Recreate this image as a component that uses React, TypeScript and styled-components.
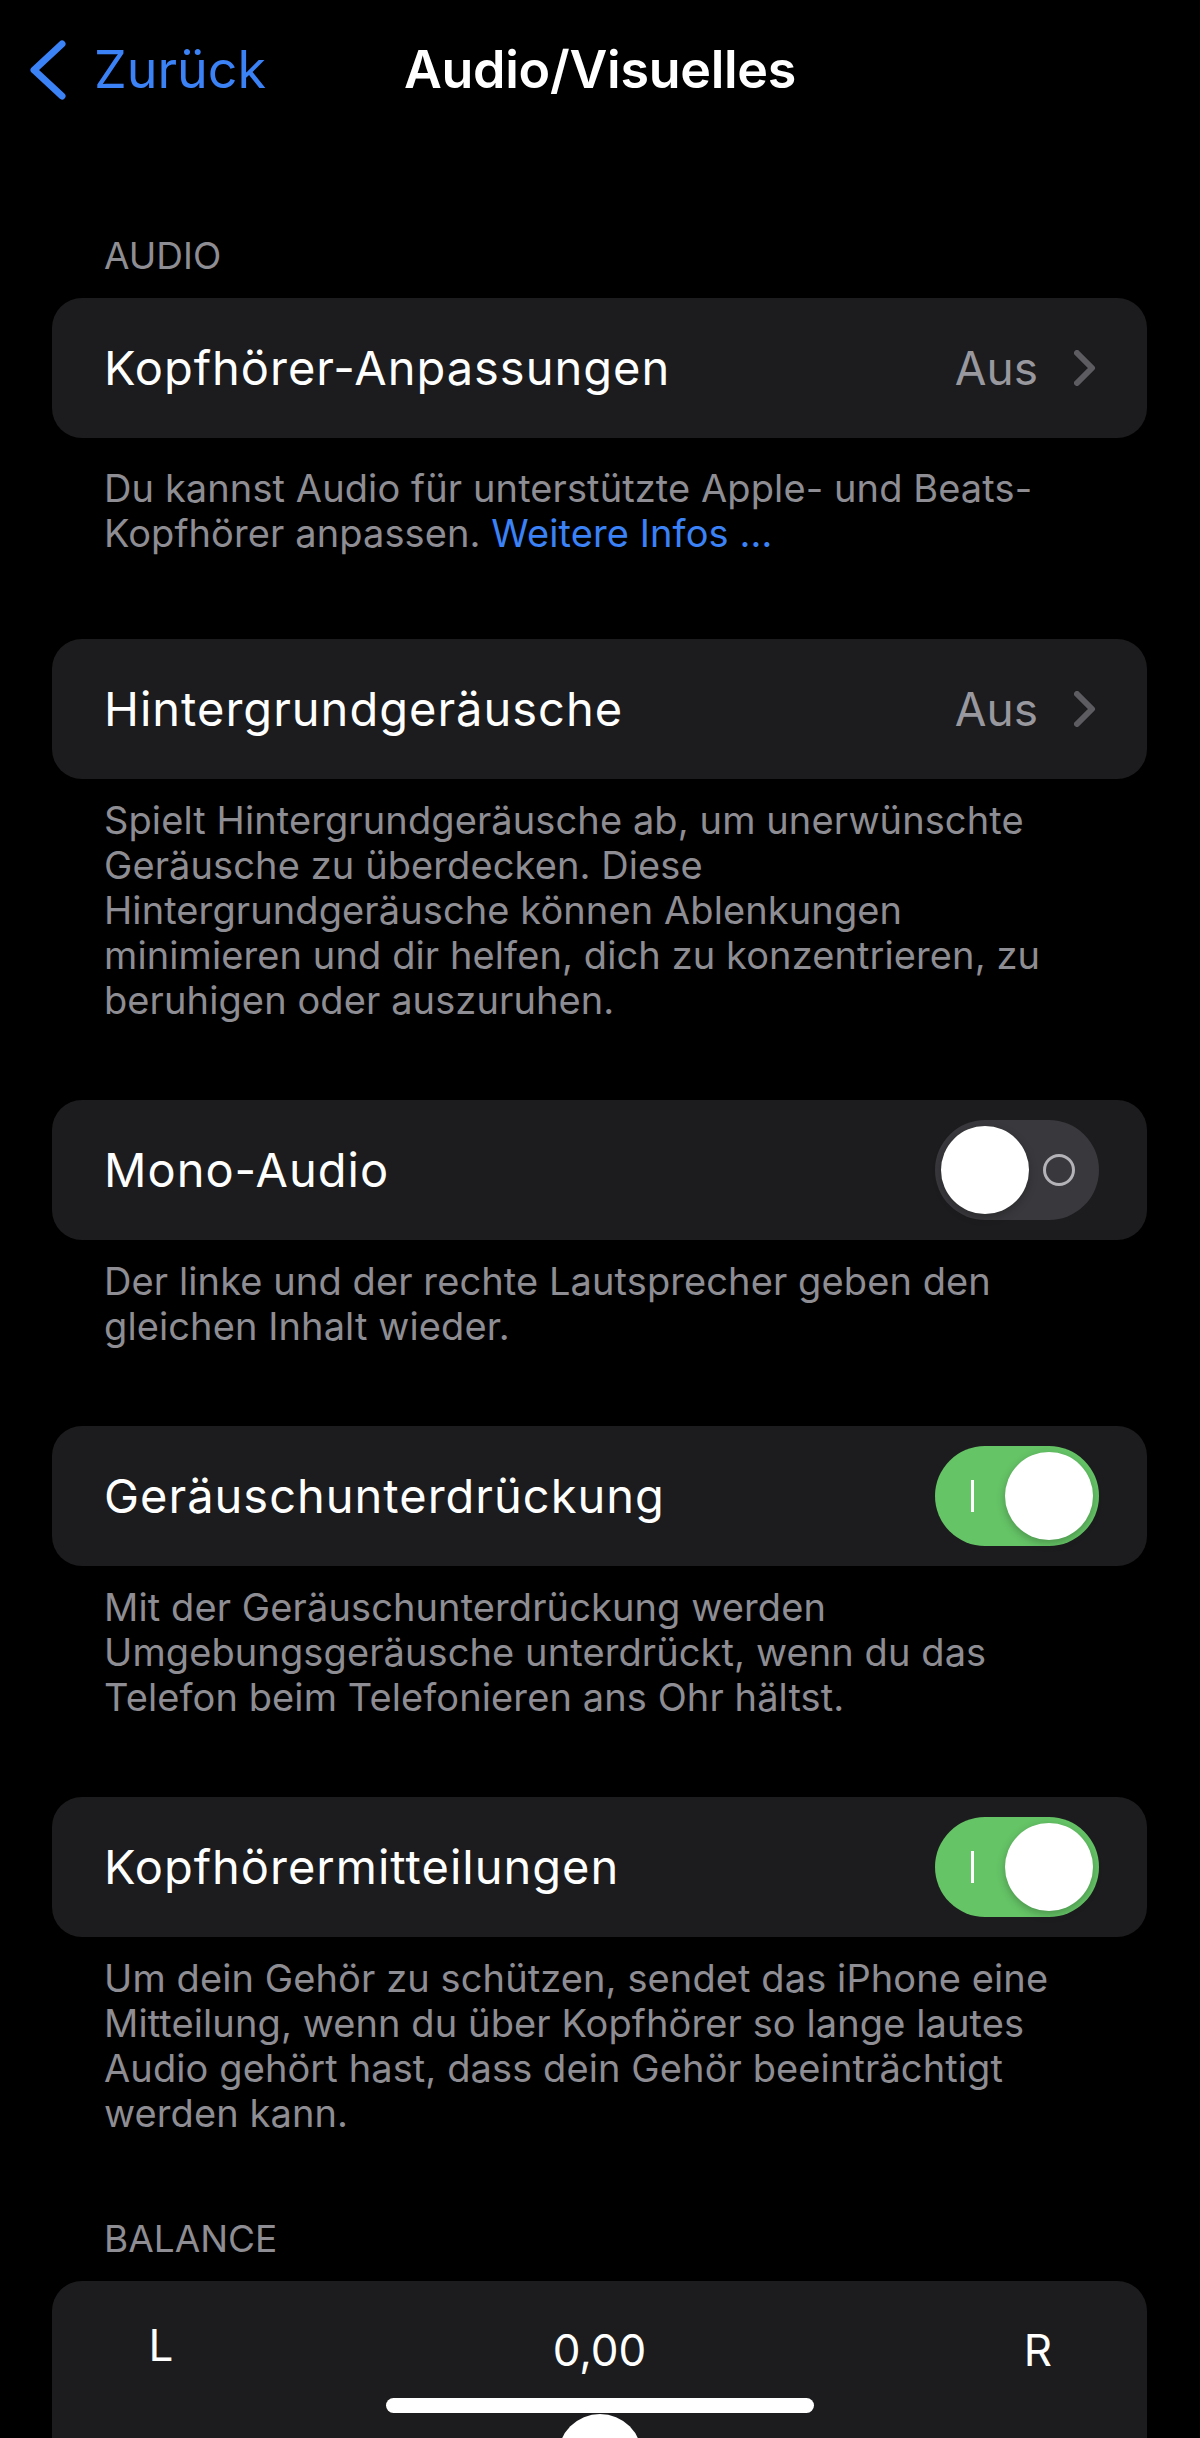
import styled, { createGlobalStyle } from 'styled-components'

const GlobalStyle = createGlobalStyle`
  body {
    margin: 0;
    background: #000;
    font-family: Inter, "Noto Sans", "Liberation Sans", sans-serif;
    overflow: hidden;
  }
`

const Page = styled.div`
  width: 1200px;
  min-height: 2438px;
  background: #000;
  color: #fff;
`

const NavBar = styled.div`
  height: 140px;
  display: grid;
  grid-template-columns: 1fr auto 1fr;
  align-items: center;
`

const BackButton = styled.div`
  display: flex;
  align-items: center;
  gap: 28px;
  padding-left: 30px;
  color: #3b82f7;
  font-size: 52px;
  line-height: 60px;
`

const Title = styled.div`
  font-size: 52px;
  font-weight: 600;
  line-height: 60px;
  letter-spacing: -0.3px;
`

const Content = styled.div`
  padding: 0 53px 0 52px;
`

const SectionHeader = styled.div<{ $top: number }>`
  margin-top: ${(p) => p.$top}px;
  margin-bottom: 20px;
  padding-left: 52px;
  color: #8d8d93;
  font-size: 37px;
  line-height: 45px;
  text-transform: uppercase;
`

const Card = styled.div`
  height: 140px;
  border-radius: 30px;
  background: #1c1c1e;
  display: flex;
  align-items: center;
  padding: 0 48px 0 52px;
`

const RowLabel = styled.div`
  flex: 1;
  font-size: 47px;
  line-height: 56px;
  letter-spacing: 1px;
  color: #fff;
`

const RowValue = styled.div`
  display: flex;
  align-items: center;
  gap: 36px;
  padding-right: 3px;
  color: #98989e;
  font-size: 46px;
  line-height: 56px;
`

const Footer = styled.div<{ $top: number; $bottom: number }>`
  padding: ${(p) => p.$top}px 40px ${(p) => p.$bottom}px 52px;
  color: #8d8d93;
  font-size: 38px;
  line-height: 45px;
  letter-spacing: 0.1px;
  white-space: nowrap;
`

const Link = styled.span`
  color: #3b82f7;
`

const Track = styled.div<{ $on: boolean }>`
  position: relative;
  width: 164px;
  height: 100px;
  border-radius: 50px;
  background: ${(p) => (p.$on ? '#65c466' : '#39393d')};
  display: flex;
  align-items: center;
  justify-content: ${(p) => (p.$on ? 'flex-end' : 'flex-start')};
  padding: 0 6px;
  box-sizing: border-box;
`

const Knob = styled.div`
  width: 88px;
  height: 88px;
  border-radius: 50%;
  background: #fff;
  box-shadow: 0 3px 8px rgba(0, 0, 0, 0.25);
`

const OnMark = styled.div`
  position: absolute;
  left: 36px;
  top: 34px;
  width: 3px;
  height: 32px;
  background: #fff;
`

const OffMark = styled.div`
  position: absolute;
  right: 24px;
  top: 34px;
  width: 26px;
  height: 26px;
  border: 3px solid #b3b3b8;
  border-radius: 50%;
`

const BalanceCard = styled.div`
  height: 320px;
  border-radius: 30px;
  background: #1c1c1e;
  padding-top: 43px;
  box-sizing: border-box;
  display: flex;
  flex-direction: column;
  align-items: center;
`

const BalanceRow = styled.div`
  width: 100%;
  display: grid;
  grid-template-columns: 218px 1fr 218px;
  align-items: start;
`

const BalanceLabel = styled.div<{ $raised?: boolean }>`
  text-align: center;
  font-size: 44px;
  line-height: 52px;
  color: #fff;
  margin-top: ${(p) => (p.$raised ? -5 : 0)}px;
`

const SliderTrack = styled.div`
  margin-top: 22px;
  width: 428px;
  height: 15px;
  border-radius: 8px;
  background: #fff;
`

const SliderThumb = styled.div`
  margin-top: 1px;
  width: 84px;
  height: 84px;
  border-radius: 50%;
  background: #fff;
`

function Toggle({ on }: { on: boolean }) {
  return (
    <Track $on={on}>
      {on ? <OnMark /> : <OffMark />}
      <Knob />
    </Track>
  )
}

function Chevron() {
  return (
    <svg width="22" height="36" viewBox="0 0 22 36">
      <polyline points="3,3 18,18 3,33" fill="none" stroke="#5c5c61" strokeWidth="6" strokeLinecap="round" strokeLinejoin="round" />
    </svg>
  )
}

function BackChevron() {
  return (
    <svg width="36" height="60" viewBox="0 0 36 60">
      <polyline points="32,4 4,30 32,56" fill="none" stroke="#3b82f7" strokeWidth="7" strokeLinecap="round" strokeLinejoin="round" />
    </svg>
  )
}

export default function App() {
  return (
    <Page>
      <GlobalStyle />
      <NavBar>
        <BackButton>
          <BackChevron />
          <span>Zurück</span>
        </BackButton>
        <Title>Audio/Visuelles</Title>
        <div />
      </NavBar>

      <Content>
        <SectionHeader $top={93}>Audio</SectionHeader>

        <Card>
          <RowLabel>Kopfhörer-Anpassungen</RowLabel>
          <RowValue>
            Aus
            <Chevron />
          </RowValue>
        </Card>
        <Footer $top={28} $bottom={83}>
          Du kannst Audio für unterstützte Apple- und Beats-
          <br />
          Kopfhörer anpassen. <Link>Weitere Infos …</Link>
        </Footer>

        <Card>
          <RowLabel>Hintergrundgeräusche</RowLabel>
          <RowValue>
            Aus
            <Chevron />
          </RowValue>
        </Card>
        <Footer $top={19} $bottom={77}>
          Spielt Hintergrundgeräusche ab, um unerwünschte
          <br />
          Geräusche zu überdecken. Diese
          <br />
          Hintergrundgeräusche können Ablenkungen
          <br />
          minimieren und dir helfen, dich zu konzentrieren, zu
          <br />
          beruhigen oder auszuruhen.
        </Footer>

        <Card>
          <RowLabel>Mono-Audio</RowLabel>
          <Toggle on={false} />
        </Card>
        <Footer $top={19} $bottom={77}>
          Der linke und der rechte Lautsprecher geben den
          <br />
          gleichen Inhalt wieder.
        </Footer>

        <Card>
          <RowLabel>Geräuschunterdrückung</RowLabel>
          <Toggle on />
        </Card>
        <Footer $top={19} $bottom={77}>
          Mit der Geräuschunterdrückung werden
          <br />
          Umgebungsgeräusche unterdrückt, wenn du das
          <br />
          Telefon beim Telefonieren ans Ohr hältst.
        </Footer>

        <Card>
          <RowLabel>Kopfhörermitteilungen</RowLabel>
          <Toggle on />
        </Card>
        <Footer $top={19} $bottom={0}>
          Um dein Gehör zu schützen, sendet das iPhone eine
          <br />
          Mitteilung, wenn du über Kopfhörer so lange lautes
          <br />
          Audio gehört hast, dass dein Gehör beeinträchtigt
          <br />
          werden kann.
        </Footer>

        <SectionHeader $top={80}>Balance</SectionHeader>
        <BalanceCard>
          <BalanceRow>
            <BalanceLabel $raised>L</BalanceLabel>
            <BalanceLabel>0,00</BalanceLabel>
            <BalanceLabel>R</BalanceLabel>
          </BalanceRow>
          <SliderTrack />
          <SliderThumb />
        </BalanceCard>
      </Content>
    </Page>
  )
}
